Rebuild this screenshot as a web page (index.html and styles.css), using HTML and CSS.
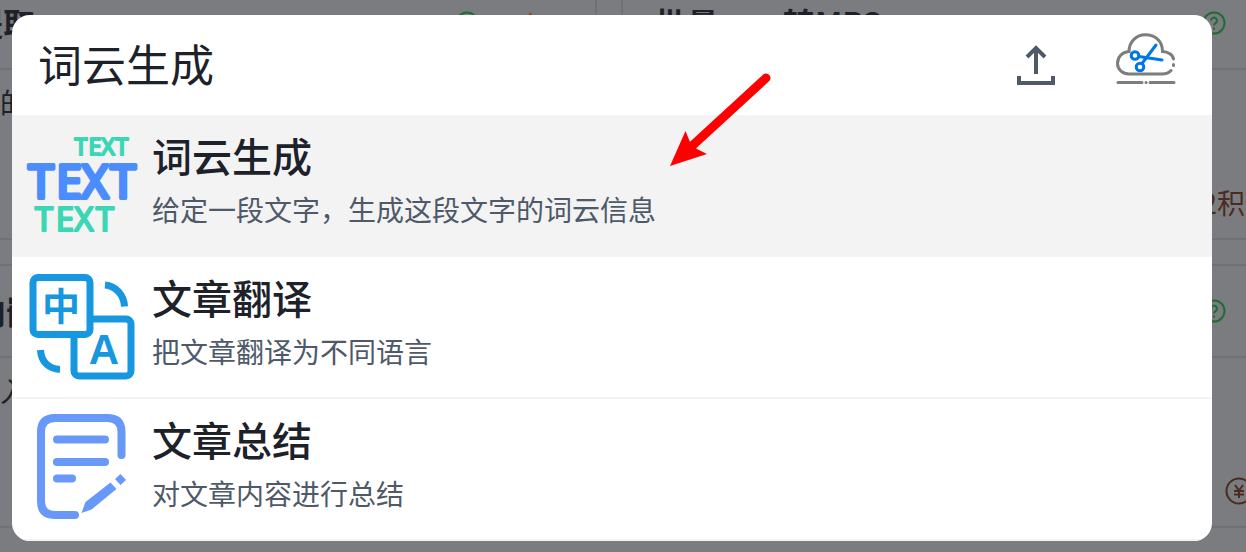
FILE: index.html
```html
<!DOCTYPE html>
<html lang="zh-CN">
<head>
<meta charset="utf-8">
<title>词云生成</title>
<link rel="stylesheet" href="styles.css">
</head>
<body>
<main class="board" aria-hidden="true">
  <section class="card">
    <header class="card-head card-head-left"><h3 class="card-title title-a">提取</h3>
      <svg class="help help-a" viewBox="0 0 24 24"><circle cx="12" cy="12" r="10.500"/><path d="M9 9.500a3 3 0 1 1 4.500 2.700q-1.500 1-1.500 2.300M12 16.500v2.200"/></svg>
      <svg class="flame" viewBox="0 0 24 24"><path d="M12 1Q22 11 18 18T6 18Q2 11 8 9Z"/></svg>
    </header>
    <p class="card-text">的</p>
  </section>
  <section class="card">
    <header class="card-head card-head-right"><h3 class="card-title title-b">批量</h3><h3 class="card-title title-c">转MP3</h3>
      <svg class="help help-b" viewBox="0 0 24 24"><circle cx="12" cy="12" r="10.500"/><path d="M9 9.500a3 3 0 1 1 4.500 2.700q-1.500 1-1.500 2.300M12 16.500v2.200"/></svg>
    </header>
    <p class="card-cost">2积</p>
  </section>
  <section class="card">
    <header class="card-head card-head-left"><h3 class="card-title title-d">内嵌</h3></header>
    <p class="card-text">入</p>
  </section>
  <section class="card">
    <header class="card-head card-head-right">
      <svg class="help help-b" viewBox="0 0 24 24"><circle cx="12" cy="12" r="10.500"/><path d="M9 9.500a3 3 0 1 1 4.500 2.700q-1.500 1-1.500 2.300M12 16.500v2.200"/></svg>
    </header>
    <svg class="coin" viewBox="0 0 28 28"><circle cx="14" cy="14" r="12.500"/><path d="M10 8l4 5.500 4-5.500M9 14h10M9 17.500h10M14 13v8"/></svg>
  </section>
</main>

<div class="overlay">
  <div class="dialog" role="dialog" aria-label="搜索">
    <form class="search">
      <input class="search-input" type="text" aria-label="搜索" value="词云生成">
      <button class="icon-button" type="button" aria-label="上传">
        <svg class="upload-icon" viewBox="0 0 38 40"><path d="M19 29V3M10 12l9-9 9 9M2 31v7h34v-7"/></svg>
      </button>
      <button class="icon-button" type="button" aria-label="截图">
        <svg class="cloud-icon" viewBox="0 0 60 54">
          <g class="cloud-line"><path d="M57.500 26C57 22 52 18.500 46.500 18.500C46.500 8 39 1.800 29.500 1.800S13 9 13 18.500C6 19 1.500 24 1.500 30.500C1.500 37 7 41 13 41H46Q52 41 55 37.500M57.500 31.500v1M2 49.500H26M30 49.500h.1M34 49.500H58"/></g>
          <g class="scissors"><circle cx="19" cy="22.500" r="3.800"/><circle cx="24" cy="34" r="3.800"/><path d="M23 23.500l23 3.500M26 30.500L40 12"/></g>
        </svg>
      </button>
    </form>
    <ul class="results">
      <li class="result result-active">
        <svg class="result-icon" viewBox="0 0 110 110">
          <g class="word-green"><text class="word-s" x="54 68 81 95" y="26">TEXT</text><text class="word-m" x="17 38 57 78" y="102">TEXT</text></g>
          <text class="word-blue" x="14 42 68 96" y="69">TEXT</text>
        </svg>
        <div class="result-body"><h2 class="result-title">词云生成</h2><p class="result-desc">给定一段文字，生成这段文字的词云信息</p></div>
      </li>
      <li class="result">
        <svg class="result-icon" viewBox="0 0 110 110">
          <g class="translate-line"><rect x="47" y="48" width="57" height="57" rx="5"/><rect class="panel" x="6" y="6.500" width="57" height="57" rx="5"/><path d="M78 14C89 15 97 24 97.500 35.500M13.500 79C14 91 22 98 33 98.500"/></g>
          <text class="glyph-zh" x="34" y="49">中</text><text class="glyph-a" x="77" y="93">A</text>
        </svg>
        <div class="result-body"><h2 class="result-title">文章翻译</h2><p class="result-desc">把文章翻译为不同语言</p></div>
      </li>
      <li class="result">
        <svg class="result-icon" viewBox="0 0 110 110">
          <g class="note-line"><path d="M94.500 42V19Q94.500 5 80.500 5H28Q14 5 14 19V88Q14 102 28 102H48"/><path d="M30 26.500H78M30 49H78M30 65.500H45"/></g>
          <path class="note-fill" d="M54.500 100l4-11 25-19.500 6 6.500-25 20.500zM88 66l5.500-5 5.500 6-5.500 5z"/>
        </svg>
        <div class="result-body"><h2 class="result-title">文章总结</h2><p class="result-desc">对文章内容进行总结</p></div>
      </li>
    </ul>
  </div>
</div>
<svg class="arrow" viewBox="0 0 102 94" aria-hidden="true"><path class="arrow-shaft" d="M96 5L22 73"/><path class="arrow-head" d="M0 93L15.500 58L20 69L27 76L37 81Z"/></svg>
</body>
</html>
```
FILE: styles.css
```css
* { box-sizing: border-box; }
body {
  margin: 0;
  height: 100vh;
  overflow: hidden;
  position: relative;
  background: #7b7c80;
  color: #1d2129;
  font-family: "Noto Sans CJK SC", "Noto Sans", sans-serif;
}
h2, h3, p, ul { margin: 0; padding: 0; }
svg { display: block; flex: none; overflow: visible; }

.board {
  display: grid;
  grid-template-columns: 1fr 1fr;
  grid-auto-rows: 264px;
  gap: 24px;
  margin: -24px -27px 0 -55px;
}
.card { border: 2px solid #6f707a; position: relative; }
.card-head { height: 92px; border-bottom: 2px solid #6f707a; position: relative; }
.card-title { position: absolute; top: 21px; font-size: 32px; line-height: 46px; white-space: nowrap; }
.title-a { left: 24px; }
.title-b { left: 32px; }
.title-c { left: 160px; }
.title-d { left: 27px; }
.card-text { position: absolute; left: 53px; top: 104px; font-size: 28px; line-height: 40px; }
.card-cost { position: absolute; right: 26px; top: 204px; font-size: 28px; line-height: 40px; color: #4b2b20; }
.help { position: absolute; top: 33px; width: 24px; height: 24px; fill: none; stroke: #206c33; stroke-width: 2; }
.help-a { left: 508px; }
.help-b { right: 45px; }
.flame { position: absolute; left: 571px; top: 33px; width: 24px; height: 24px; fill: #924821; }
.coin { position: absolute; right: 18px; top: 211px; width: 28px; height: 28px; fill: none; stroke: #4b2b20; stroke-width: 2; }

.overlay { position: absolute; inset: 0; padding: 15px 34px 11px 12px; }
.dialog { background: #fff; border-radius: 18px; overflow: hidden; }
.search { display: flex; align-items: center; height: 100px; padding: 0 36px 0 26px; gap: 61px; }
.search-input {
  flex: 1;
  min-width: 0;
  border: 0;
  outline: 0;
  padding: 0;
  margin-bottom: 4px;
  background: transparent;
  color: #1d2129;
  font: 400 44px/64px "Noto Sans CJK SC", sans-serif;
}
.icon-button { border: 0; padding: 0; background: none; }
.upload-icon { width: 38px; height: 40px; fill: none; stroke: #4e5969; stroke-width: 4; }
.cloud-icon { width: 60px; height: 54px; margin-bottom: 10px; fill: none; stroke-linecap: round; }
.cloud-line { stroke: #7d7d7d; stroke-width: 3; }
.scissors { stroke: #0077e6; stroke-width: 3; }

.results { list-style: none; }
.result {
  display: flex;
  align-items: flex-start;
  gap: 15px;
  height: 142px;
  padding: 14px 15px;
  border-bottom: 2px solid #f3f3f3;
}
.result-active { background: #f3f3f3; }
.result-icon { width: 110px; height: 110px; }
.result-title { font-size: 40px; line-height: 52px; font-weight: 500; }
.result-desc { margin-top: 7px; font-size: 28px; line-height: 42px; color: #4e5969; font-weight: 400; }

.result-icon text { font-family: "Liberation Sans Narrow", "Noto Sans", sans-serif; stroke-linejoin: round; text-anchor: middle; }
.word-green { fill: #3bd6b3; stroke: #3bd6b3; stroke-width: 2; }
.word-s { font-size: 23px; }
.word-m { font-size: 33px; }
.word-blue { font-size: 46px; fill: #4b8dff; stroke: #4b8dff; stroke-width: 4; }
.translate-line { fill: none; stroke: #1697e0; stroke-width: 7; }
.panel { fill: #fff; }
.result-icon .glyph-zh { font: 700 38px "Noto Sans CJK SC", sans-serif; fill: #1697e0; }
.result-icon .glyph-a { font: 700 42px "Liberation Sans", sans-serif; fill: #1697e0; }
.note-line { fill: none; stroke: #6898f8; stroke-width: 8; stroke-linecap: round; }
.note-fill { fill: #6898f8; }

.arrow { position: absolute; left: 670px; top: 73px; width: 102px; height: 94px; }
.arrow-shaft { stroke: #f00; stroke-width: 9; stroke-linecap: round; }
.arrow-head { fill: #f00; }
```
